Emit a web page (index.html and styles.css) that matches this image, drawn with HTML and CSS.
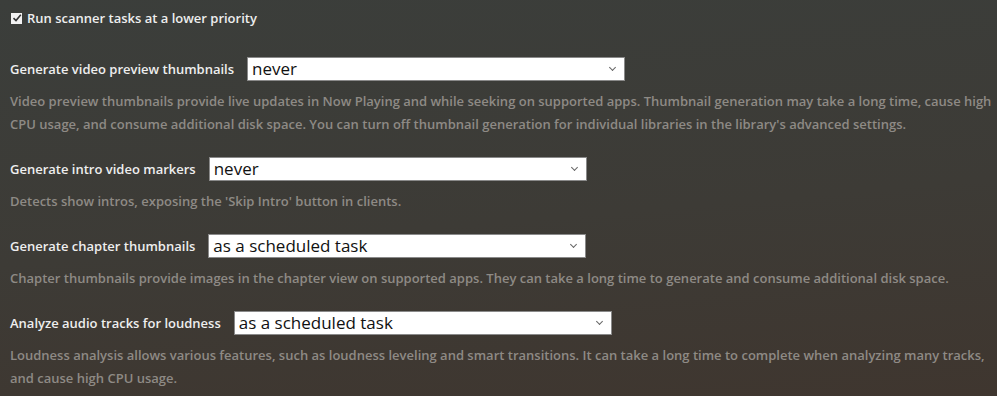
FILE: index.html
```html
<!DOCTYPE html>
<html lang="en">
<head>
    <meta charset="UTF-8">
    <title>Scheduled Tasks</title>
    <link rel="stylesheet" href="styles.css">
</head>
<body>

<section class="settings">
    <label class="check-row">
        <span class="check-box">
            <svg width="10" height="10" viewBox="0 0 10 10"><path d="M1.5 5.2 L4 7.6 L8.8 1.8" fill="none" stroke="#333" stroke-width="1.6"/></svg>
        </span>
        Run scanner tasks at a lower priority
    </label>

    <div class="setting first">
        <div class="setting-row">
            <label class="setting-label">Generate video preview thumbnails</label>
            <div class="select">never<span class="caret"></span></div>
        </div>
        <p class="help">Video preview thumbnails provide live updates in Now Playing and while seeking on supported apps. Thumbnail generation may take a long time, cause high CPU usage, and consume additional disk space. You can turn off thumbnail generation for individual libraries in the library's advanced settings.</p>
    </div>

    <div class="setting">
        <div class="setting-row">
            <label class="setting-label">Generate intro video markers</label>
            <div class="select">never<span class="caret"></span></div>
        </div>
        <p class="help">Detects show intros, exposing the 'Skip Intro' button in clients.</p>
    </div>

    <div class="setting">
        <div class="setting-row">
            <label class="setting-label">Generate chapter thumbnails</label>
            <div class="select">as a scheduled task<span class="caret"></span></div>
        </div>
        <p class="help">Chapter thumbnails provide images in the chapter view on supported apps. They can take a long time to generate and consume additional disk space.</p>
    </div>

    <div class="setting">
        <div class="setting-row">
            <label class="setting-label">Analyze audio tracks for loudness</label>
            <div class="select">as a scheduled task<span class="caret"></span></div>
        </div>
        <p class="help">Loudness analysis allows various features, such as loudness leveling and smart transitions. It can take a long time to complete when analyzing many tracks, and cause high CPU usage.</p>
    </div>
</section>

</body>
</html>
```

FILE: styles.css
```css
html, body {
    height: 100%;
}
body {
    margin: 0;
    padding: 0;
    font-family: "Open Sans", sans-serif;
    font-weight: 600;
    font-size: 13px;
    color: #eeeeee;
    background: linear-gradient(175deg, #3b3e3b 0%, #3d3b36 55%, #3f362f 100%);
    overflow: hidden;
}
.settings {
    padding: 8px 4px 0 10px;
}
.check-row {
    display: flex;
    align-items: center;
    gap: 5px;
    height: 20px;
    font-size: 13px;
}
.check-box {
    width: 11px;
    height: 11px;
    background-color: #f2f2f2;
    display: flex;
    align-items: center;
    justify-content: center;
    margin-left: 1px;
}
.setting.first {
    margin-top: 29px;
}
.setting {
    margin-bottom: 21px;
}
.setting-row {
    display: flex;
    align-items: center;
    height: 24px;
}
.setting-label {
    margin-right: 13px;
}
.select {
    position: relative;
    width: 372px;
    height: 22px;
    background-color: #fff;
    border: 1px solid #8a8a8a;
    color: #111;
    font-weight: 400;
    font-size: 17px;
    line-height: 22px;
    padding-left: 4px;
}
.caret {
    position: absolute;
    right: 9px;
    top: 7px;
    width: 4px;
    height: 4px;
    border-right: 1px solid #666;
    border-bottom: 1px solid #666;
    transform: rotate(45deg);
}
.help {
    margin: 9px 0 0 0;
    color: #8e8a85;
    line-height: 23px;
    font-size: 13px;
}
```
